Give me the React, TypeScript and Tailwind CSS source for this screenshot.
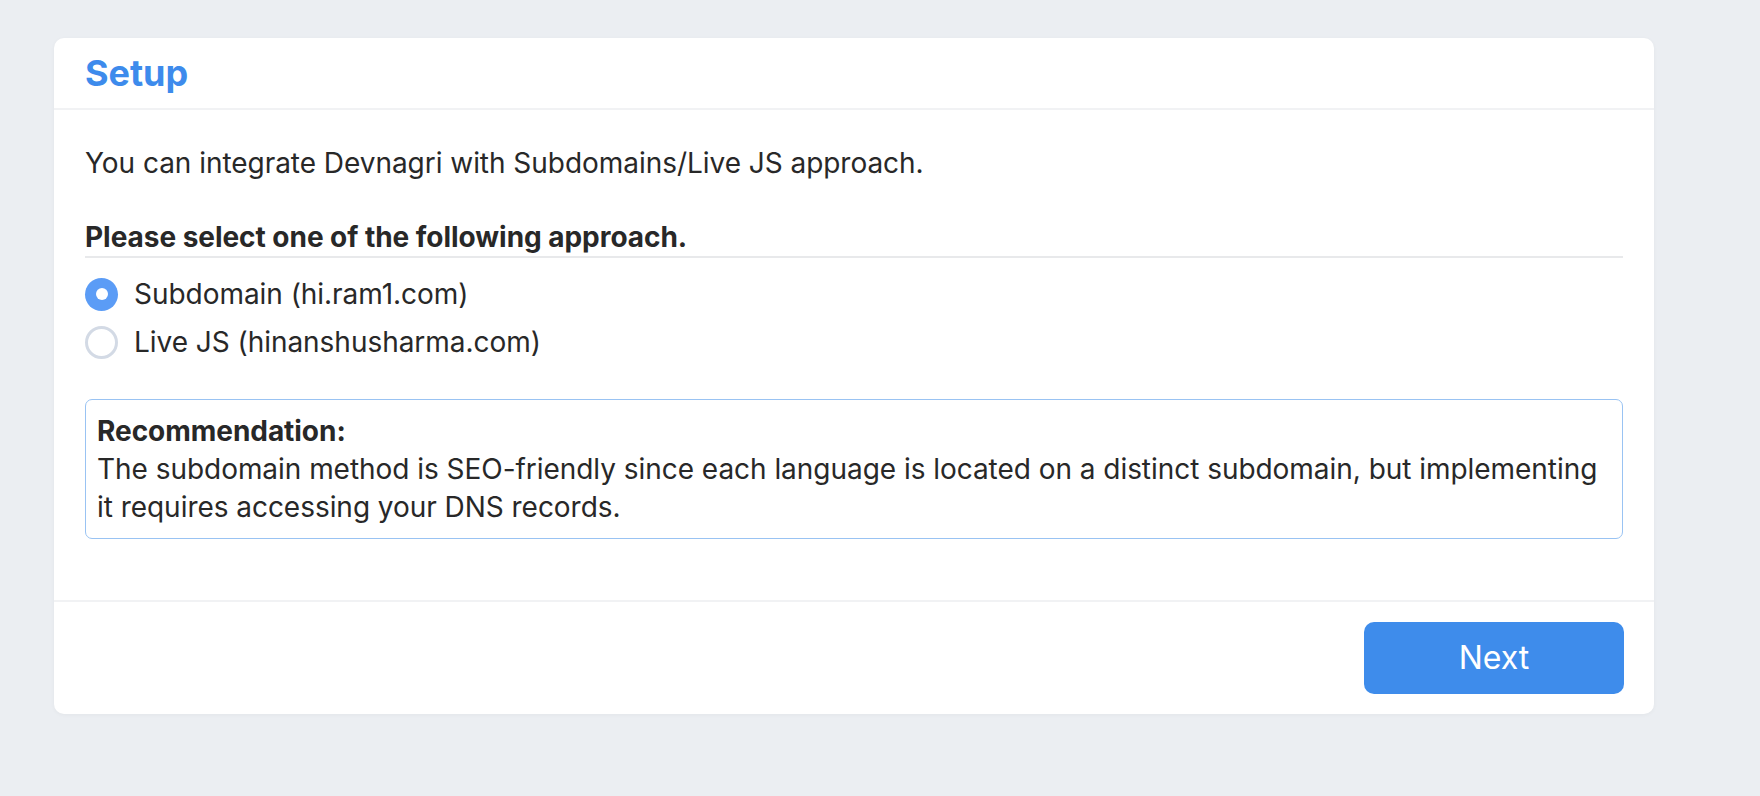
import { useState } from "react";

const options = [
  { id: "subdomain", label: "Subdomain (hi.ram1.com)" },
  { id: "livejs", label: "Live JS (hinanshusharma.com)" },
];

function Radio({ checked }: { checked: boolean }) {
  if (checked) {
    return (
      <span className="w-[33px] h-[33px] rounded-full bg-[#5b9cf6] flex items-center justify-center shrink-0">
        <span className="w-[12px] h-[12px] rounded-full bg-white" />
      </span>
    );
  }
  return <span className="w-[33px] h-[33px] rounded-full border-[3px] border-[#d3dae5] bg-white shrink-0" />;
}

export default function App() {
  const [approach, setApproach] = useState("subdomain");

  return (
    <div
      className="min-h-[796px] bg-[#ebeef2] pt-[38px] pl-[54px] text-[#282828] tracking-[-0.04px]"
      style={{ fontFamily: "Inter, 'Noto Sans', sans-serif" }}
    >
      <div className="w-[1600px] bg-white rounded-[10px] shadow-[0_1px_4px_rgba(0,0,0,0.04)]">
        {/* Header */}
        <div className="h-[72px] px-[31px] flex items-center border-b-2 border-[#f1f2f4]">
          <h1 className="text-[36px] font-bold text-[#3d8bec] leading-none">Setup</h1>
        </div>

        {/* Body */}
        <div className="px-[31px] pt-[34px] pb-[61px]">
          <p className="text-[28px] leading-[38px]">
            You can integrate Devnagri with Subdomains/Live JS approach.
          </p>

          <div className="mt-[36px] border-b-2 border-[#e8e9eb]">
            <p className="text-[28px] leading-[38px] font-bold">
              Please select one of the following approach.
            </p>
          </div>

          <div className="mt-[12px] flex flex-col">
            {options.map((opt) => (
              <label
                key={opt.id}
                className="h-[48px] flex items-center gap-[16px] cursor-pointer"
                onClick={() => setApproach(opt.id)}
              >
                <Radio checked={approach === opt.id} />
                <span className="text-[28px] leading-[48px]">{opt.label}</span>
              </label>
            ))}
          </div>

          <div className="mt-[33px] border-[1.5px] border-[#99c3f3] rounded-[7px] px-[11px] py-[12px]">
            <p className="text-[28px] leading-[38px] font-bold">Recommendation:</p>
            <p className="text-[28px] leading-[38px]">
              The subdomain method is SEO-friendly since each language is located on a distinct subdomain, but implementing
              it requires accessing your DNS records.
            </p>
          </div>
        </div>

        {/* Footer */}
        <div className="border-t-2 border-[#f1f2f4] px-[30px] pt-[20px] pb-[20px] flex justify-end">
          <button className="w-[260px] h-[72px] rounded-[10px] bg-[#3e8ceb] text-white text-[32px]">
            Next
          </button>
        </div>
      </div>
    </div>
  );
}
